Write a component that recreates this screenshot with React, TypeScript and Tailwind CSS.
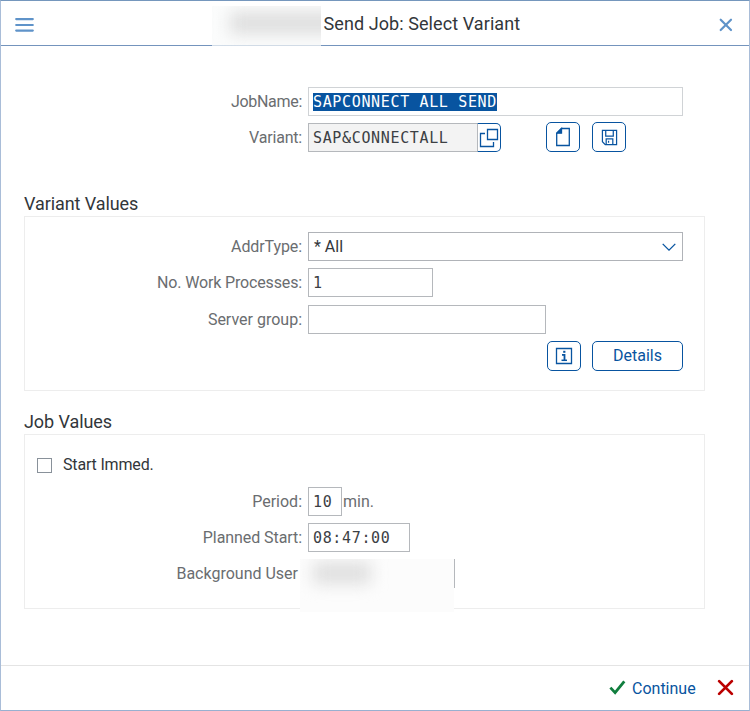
import type { ReactNode } from "react";

const SANS = "font-[Roboto,'Noto_Sans',sans-serif]";
const MONO = "font-['DejaVu_Sans_Mono','Liberation_Mono',monospace]";

function Label({ children, className = "" }: { children: ReactNode; className?: string }) {
  return (
    <div className={`w-[302px] shrink-0 text-right text-[16px] leading-[29px] text-[#6a6d70] whitespace-nowrap ${className}`}>
      <span>{children}</span>
    </div>
  );
}

function Field({ children, className = "" }: { children?: ReactNode; className?: string }) {
  return (
    <div className={`ml-[6px] h-[29px] shrink-0 border border-[#b5b8bc] pl-1 text-[15px] leading-[28px] tracking-[0.65px] whitespace-pre text-[#3c4044] ${MONO} ${className}`}>
      {children}
    </div>
  );
}

function IconButton({ children, className = "" }: { children: ReactNode; className?: string }) {
  return (
    <button className={`flex h-[30px] shrink-0 items-center justify-center rounded-[5px] border border-[#0854a0] bg-white text-[#0854a0] ${className}`}>
      {children}
    </button>
  );
}

function Panel({ children }: { children: ReactNode }) {
  return <div className="ml-[23px] h-[175px] w-[681px] border border-[#ededed]">{children}</div>;
}

export default function App() {
  return (
    <div className={`flex h-[711px] w-[750px] flex-col overflow-hidden border-x border-t border-b border-x-[#a9bdd8] border-t-[#7597bd] border-b-[#98b0d0] bg-white ${SANS}`}>
      <header className="relative flex h-[45px] shrink-0 items-center border-b border-[#7494bd]">
        <svg className="mt-[3px] ml-[14px]" width="19" height="16" viewBox="0 0 19 16" stroke="#5f93c9" strokeWidth="2.2" strokeLinecap="round">
          <path d="M1.2 2.1h16.6M1.2 8h16.6M1.2 13.6h16.6" />
        </svg>
        <div className="absolute top-[5px] left-[211px] h-[40px] w-[109px] overflow-hidden bg-[#fafbfb]/70">
          <div className="mt-[6px] ml-[18px] h-[22px] w-[110px] bg-[#dedede] blur-[8px]" />
        </div>
        <h1 className="mt-[2px] ml-[289.5px] text-[18px] leading-[24px] tracking-[0.08px] whitespace-nowrap text-[#32363a]">Send Job: Select Variant</h1>
        <svg className="absolute top-[17px] left-[718px]" width="14" height="14" viewBox="0 0 14 14" stroke="#5f93c9" strokeWidth="2.2" strokeLinecap="round">
          <path d="M1.7 1.7l10.3 10.3M12 1.7L1.7 12" />
        </svg>
      </header>

      <main className="h-[619px] shrink-0 pt-[41px]">
        <div className="-ml-px flex h-[29px]">
          <Label className="tracking-[-0.3px]">JobName:</Label>
          <Field className="w-[375px] border-[#d0d3d6]">
            <span className="mt-[5px] block h-[18px] w-[184px] bg-[#0854a0] leading-[18px] text-white">SAPCONNECT ALL SEND</span>
          </Field>
        </div>
        <div className="-ml-px mt-[7px] flex h-[29px]">
          <Label className="tracking-[-0.2px]">Variant:</Label>
          <Field className="w-[170px] bg-[#f3f3f3]">SAP&amp;CONNECTALL</Field>
          <div className="-ml-px flex h-[29px] w-[24px] items-center justify-center rounded-r-[5px] border border-[#0854a0] border-l-[#b5b8bc] bg-white">
            <svg width="20" height="20" viewBox="0 0 20 20" fill="none" stroke="#0854a0" strokeWidth="1.3">
              <path d="M8.5 1.5h10v10h-10zM6 5.5H1.5v13h13V14" />
            </svg>
          </div>
          <IconButton className="-mt-px ml-[45px] w-[34px]">
            <svg width="14" height="20" viewBox="0 0 14 20" fill="none" stroke="#0854a0" strokeWidth="1.3">
              <path d="M5.5 1.5h7.8v17H.7V6.2z" />
              <path d="M5.5 1.5v4.7H.7z" fill="#0854a0" />
            </svg>
          </IconButton>
          <IconButton className="-mt-px ml-[12px] w-[34px]">
            <svg width="17" height="17" viewBox="0 0 18 18" fill="none" stroke="#0854a0" strokeWidth="1.3">
              <path d="M1.5 1.5h15v15h-12l-3-3zM5 1.5v6h8v-6M5.5 16.5v-6h7v6M8 12.5v2" />
            </svg>
          </IconButton>
        </div>

        <h2 className="mt-[39px] ml-[23px] h-[25px] text-[18px] leading-[26px] tracking-[-0.08px] text-[#32363a]">Variant Values</h2>
        <Panel>
          <div className="-ml-[25px] mt-[15px] flex h-[29px]">
            <Label className="tracking-[-0.1px]">AddrType:</Label>
            <div className="ml-[6px] flex h-[29px] w-[375px] items-center justify-between border border-[#b0b3b8] pr-[6px] pl-[5px]">
              <span className="text-[16px] text-[#32363a]">* All</span>
              <svg width="14" height="9" viewBox="0 0 14 9" fill="none" stroke="#0854a0" strokeWidth="1.3">
                <path d="M.7 1.9L7 8.1l6.3-6.2" />
              </svg>
            </div>
          </div>
          <div className="-ml-[25px] mt-[7px] flex h-[29px]">
            <Label className="tracking-[-0.15px]">No. Work Processes:</Label>
            <Field className="w-[125px]">1</Field>
          </div>
          <div className="-ml-[25px] mt-[8px] flex h-[29px]">
            <Label>Server group:</Label>
            <Field className="w-[238px]" />
          </div>
          <div className="mt-[7px] flex pl-[522px]">
            <IconButton className="w-[34px]">
              <svg width="18" height="18" viewBox="0 0 18 18" fill="none" stroke="#0854a0" strokeWidth="1.3">
                <path d="M1.5 1.5h15v15h-15z" />
                <path d="M8.2 4.8h2.2" strokeWidth="2" />
                <path d="M7 7.9h2.5v5.4" strokeWidth="1.8" />
                <path d="M6.5 13.3h5.5" strokeWidth="1.5" />
              </svg>
            </IconButton>
            <IconButton className="ml-[11px] w-[91px] text-[16px]">
              <span>Details</span>
            </IconButton>
          </div>
        </Panel>

        <h2 className="mt-[18px] ml-[23px] h-[25px] text-[18px] leading-[26px] tracking-[-0.08px] text-[#32363a]">Job Values</h2>
        <Panel>
          <div className="mt-[17px] ml-[12px] flex h-[26px] items-center">
            <div className="h-[15px] w-[15px] border border-[#89919a]" />
            <span className="ml-[11px] text-[16px] tracking-[-0.17px] text-[#32363a]">Start Immed.</span>
          </div>
          <div className="-ml-[25px] mt-[9px] flex h-[29px]">
            <Label>Period:</Label>
            <Field className="w-[34px]">10</Field>
            <span className="ml-[1px] text-[16px] leading-[29px] text-[#6a6d70]">min.</span>
          </div>
          <div className="-ml-[25px] mt-[7px] flex h-[29px]">
            <Label className="tracking-[-0.07px]">Planned Start:</Label>
            <Field className="w-[102px]">08:47:00</Field>
          </div>
          <div className="-ml-[25px] mt-[7px] flex">
            <Label className="pr-[4px]">Background User</Label>
            <div className="relative z-10 -ml-[2px] h-[53px] w-[154px] overflow-hidden bg-[#fcfcfc]">
              <div className="mt-[3px] ml-[13px] h-[22px] w-[58px] bg-[#dfdfdf] blur-[8px]" />
            </div>
            <div className="h-[29px] w-px bg-[#b5b8bc]" />
          </div>
        </Panel>
      </main>

      <footer className="flex min-h-0 flex-1 items-center border-t border-[#e4e4e4]">
        <svg className="ml-[608px]" width="17" height="16" viewBox="0 0 17 16" fill="none" stroke="#107e3e" strokeWidth="2.8">
          <path d="M1.4 7.6l4.7 5L15.3 1.3" />
        </svg>
        <span className="mt-px ml-[6px] w-[64px] text-[16px] whitespace-nowrap text-[#0854a0]">Continue</span>
        <svg className="mb-px ml-[21px]" width="17" height="17" viewBox="0 0 16 16" stroke="#bb0000" strokeWidth="2.6" strokeLinecap="round">
          <path d="M2 2l12 12M14 2L2 14" />
        </svg>
      </footer>
    </div>
  );
}
